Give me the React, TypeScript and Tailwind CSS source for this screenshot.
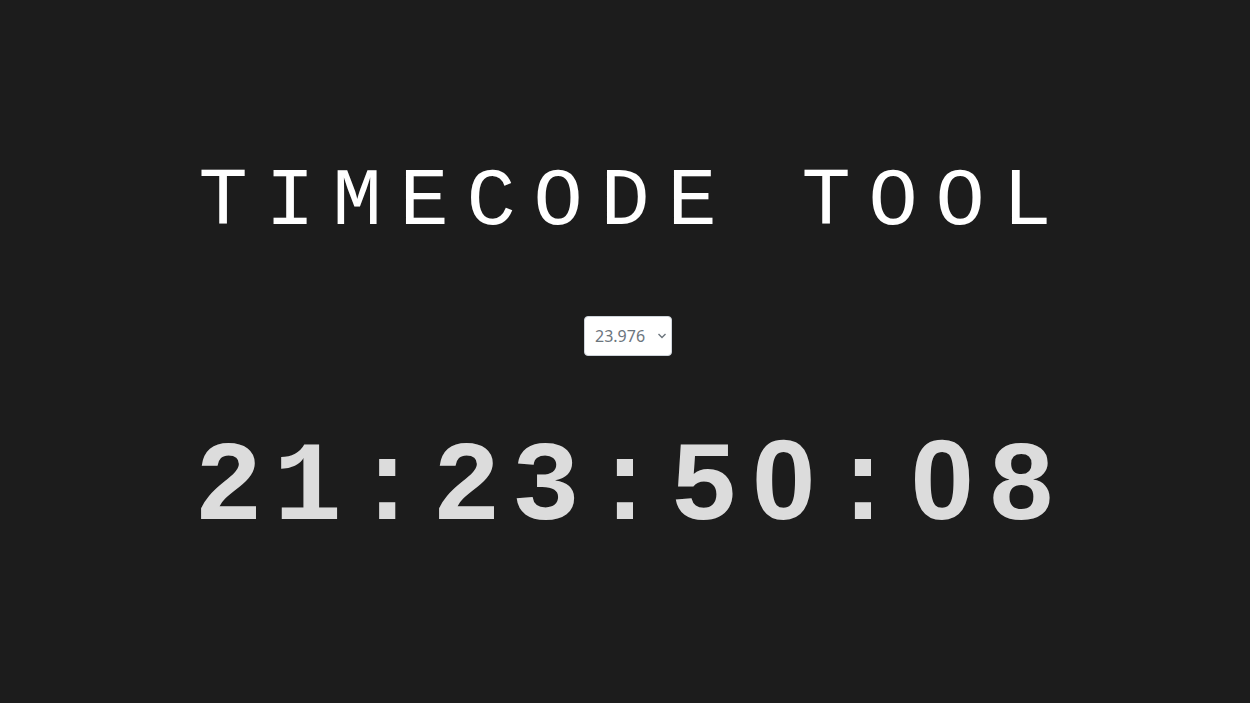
import React from "react";

function Cells({ text, cell, zeroSans }: { text: string; cell: string; zeroSans?: boolean }) {
  return (
    <>
      {text.split("").map((ch, i) => (
        <span
          key={i}
          className={
            zeroSans && ch === "0"
              ? `${cell} inline-block text-center font-['Liberation_Sans',sans-serif]`
              : `${cell} inline-block text-center`
          }
        >
          {ch === " " ? "\u00a0" : ch}
        </span>
      ))}
    </>
  );
}

export default function App() {
  return (
    <div className="w-[1250px] h-[703px] bg-[#1c1c1c] flex flex-col items-center overflow-hidden">
      <h1 className="mt-[153px] h-[100px] flex items-center text-white text-[82px] leading-none whitespace-nowrap font-['Liberation_Mono',monospace]">
        <Cells text="TIMECODE TOOL" cell="w-[67px]" />
      </h1>
      <div className="mt-[63px] ml-[6px] relative w-[88px] h-[40px]">
        <select
          defaultValue="23.976"
          className="appearance-none w-full h-full bg-white border border-[#ced4da] rounded-[4px] pl-[10px] pr-[20px] text-[16px] text-[#6c757d] outline-none font-['Noto_Sans','Open_Sans',sans-serif]"
        >
          <option>23.976</option>
          <option>24</option>
          <option>25</option>
          <option>29.97</option>
          <option>30</option>
        </select>
        <svg
          className="absolute right-[5px] top-[16px] pointer-events-none"
          width="10"
          height="8"
          viewBox="0 0 10 8"
          fill="none"
        >
          <path d="M1.5 2 L5 5.5 L8.5 2" stroke="#6c757d" strokeWidth="1.4" />
        </svg>
      </div>
      <div className="mt-[67px] text-[#dcdcdc] text-[114px] font-bold leading-none whitespace-nowrap font-['Liberation_Mono',monospace]">
        <Cells text="21:23:50:08" cell="w-[79.3px]" zeroSans />
      </div>
    </div>
  );
}
